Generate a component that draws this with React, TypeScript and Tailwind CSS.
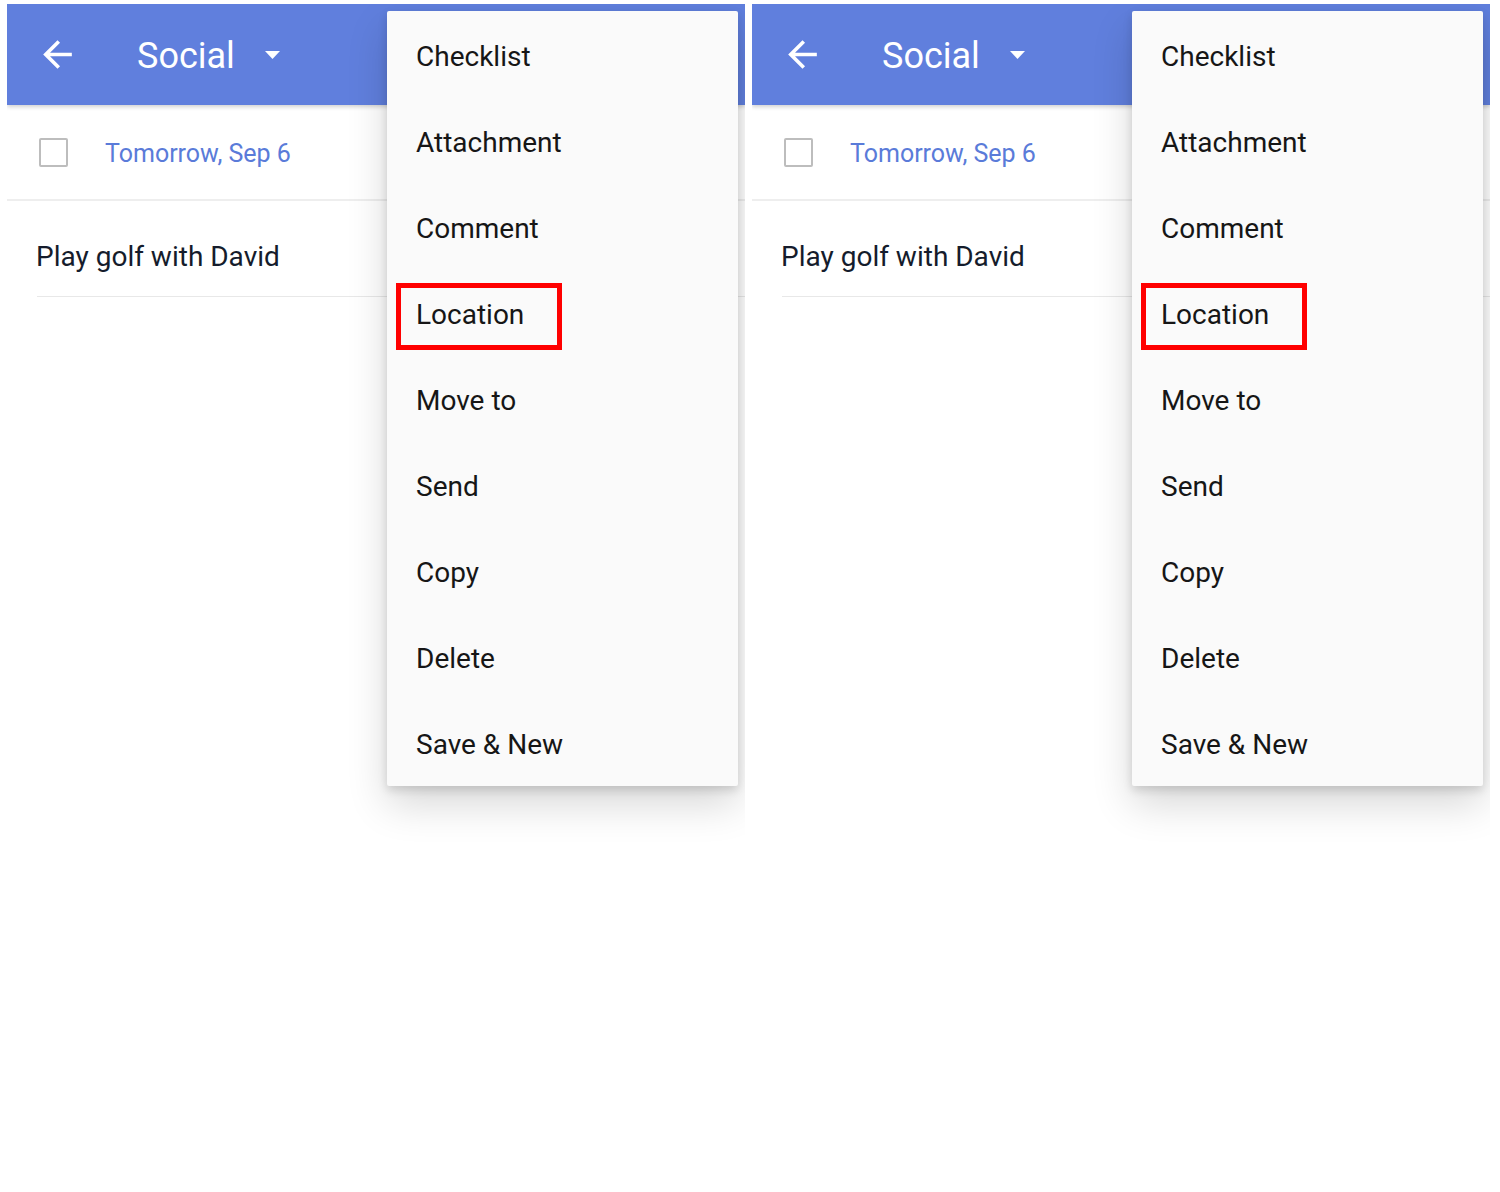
import React from "react";

const items = ["Checklist", "Attachment", "Comment", "Location", "Move to", "Send", "Copy", "Delete", "Save & New"];

function Panel() {
  return (
    <div className="relative w-[738px] h-[845px] overflow-hidden bg-white" style={{ fontFamily: "Roboto, 'Noto Sans', sans-serif" }}>
      <div className="relative h-[101px] bg-[#607fdd] flex items-center shadow-[0_2px_4px_rgba(0,0,0,0.18)] z-10">
        <svg className="ml-[29px]" width="43" height="43" viewBox="0 0 24 24" fill="#ffffff">
          <path d="M20 11H7.83l5.59-5.59L12 4l-8 8 8 8 1.41-1.41L7.83 13H20v-2z" />
        </svg>
        <span className="ml-[58px] text-[36px] leading-none text-white mt-[2px]">Social</span>
        <svg className="ml-[30px] mt-[1px]" width="15" height="8" viewBox="0 0 15 8" fill="#ffffff">
          <path d="M0 0h15L7.5 8z" />
        </svg>
      </div>
      <div className="h-[96px] flex items-center border-b-2 border-[#eeeeee]">
        <div className="ml-[32px] w-[29px] h-[29px] border-[2.5px] border-[#bdbdbd] rounded-[2px]" />
        <span className="ml-[37px] text-[25px] text-[#5a7bd9] mt-[3px]">Tomorrow, Sep 6</span>
      </div>
      <div className="ml-[30px] h-[96px] pt-[17px] flex items-center border-b border-[#e8e8e8]">
        <span className="-ml-[1px] text-[28px] text-[#151c2c]">Play golf with David</span>
      </div>
      <div className="absolute left-[380px] top-[7px] w-[351px] h-[775px] pt-[1px] bg-[#fafafa] rounded-[2px] shadow-[0_18px_40px_rgba(0,0,0,0.16),0_4px_10px_rgba(0,0,0,0.14)] z-20">
        {items.map((t) => (
          <div key={t} className="h-[86px] flex items-center pl-[29px] pt-[3px] text-[28px] text-[#161616]">
            {t}
          </div>
        ))}
        <div className="absolute left-[9px] top-[272px] w-[166px] h-[67px] border-[5px] border-[#ff0000]" />
      </div>
    </div>
  );
}

export default function App() {
  return (
    <div className="w-[1500px] h-[1192px] bg-white flex gap-[7px] pl-[7px] pt-[4px]">
      <Panel />
      <Panel />
    </div>
  );
}
